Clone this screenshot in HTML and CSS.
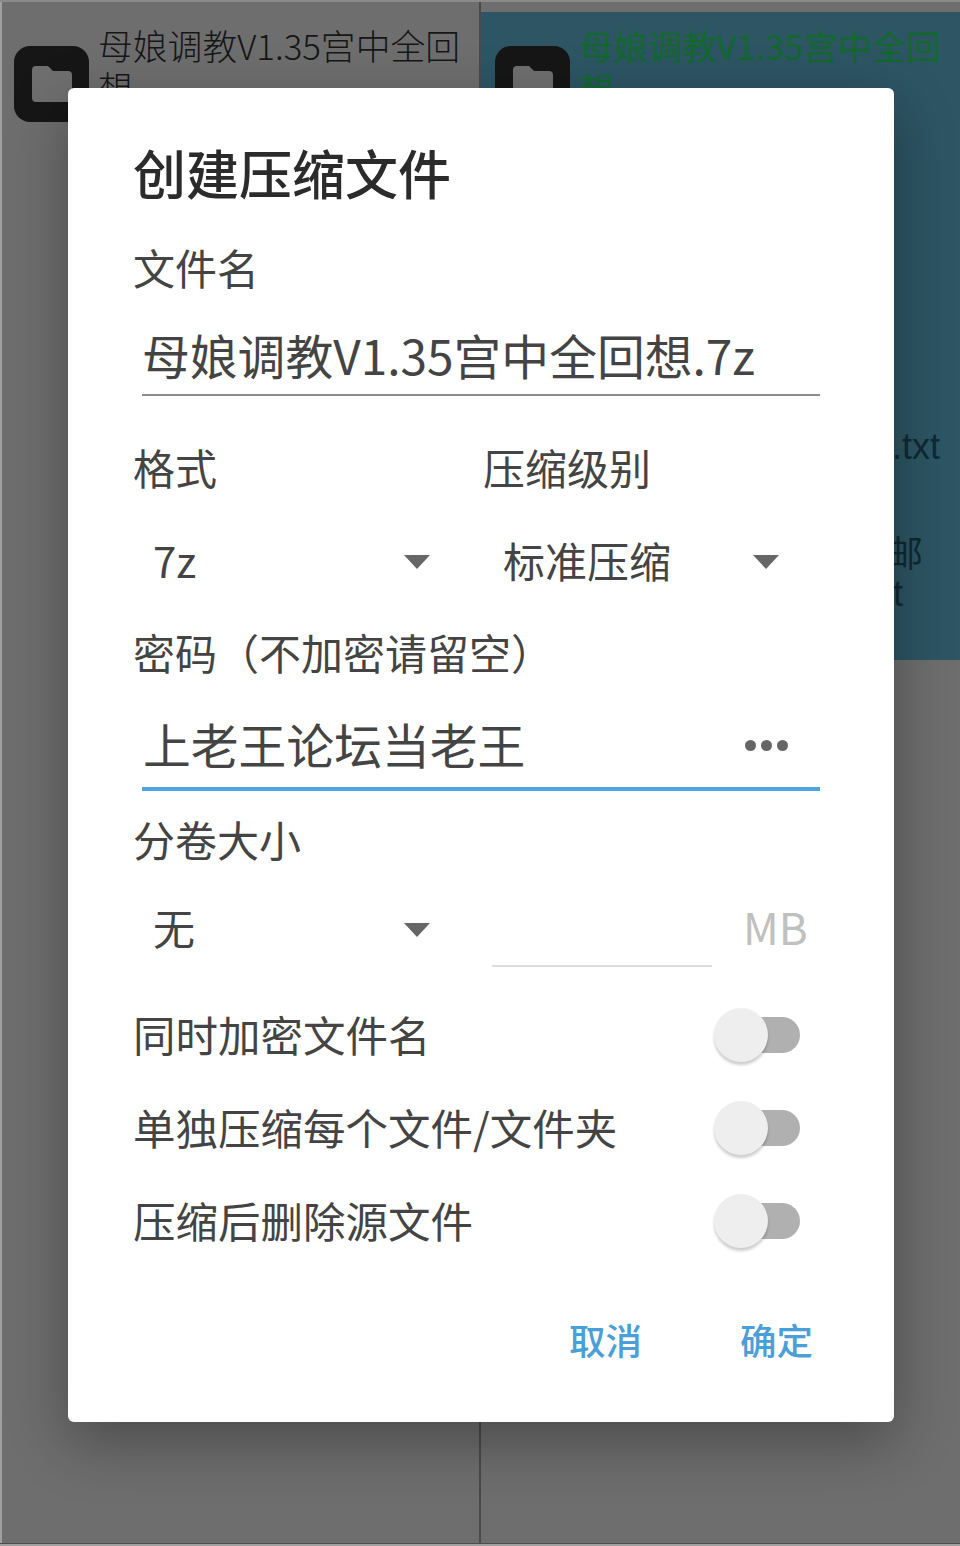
FILE: index.html
```html
<!DOCTYPE html>
<html lang="zh-CN">
<head>
  <meta charset="UTF-8">
  <title>创建压缩文件</title>
  <link rel="stylesheet" href="styles.css">
</head>
<body>
  <div class="panes">
    <div class="pane">
      <div class="file">
        <div class="folder">
          <svg width="40" height="36" viewBox="0 0 40 36"><path d="M4 0h12l5 5h15a4 4 0 0 1 4 4v23a4 4 0 0 1-4 4H4a4 4 0 0 1-4-4V4a4 4 0 0 1 4-4z" fill="#6f6f6f"/></svg>
        </div>
        <div class="file-name">母娘调教V1.35宫中全回想</div>
      </div>
    </div>
    <div class="pane pane-right">
      <div class="selected">
        <div class="file">
          <div class="folder">
            <svg width="40" height="36" viewBox="0 0 40 36"><path d="M4 0h12l5 5h15a4 4 0 0 1 4 4v23a4 4 0 0 1-4 4H4a4 4 0 0 1-4-4V4a4 4 0 0 1 4-4z" fill="#6f6f6f"/></svg>
          </div>
          <div class="file-name green">母娘调教V1.35宫中全回想</div>
        </div>
        <div class="peek peek-txt">.txt</div>
        <div class="peek peek-mail">邮</div>
        <div class="peek peek-t">t</div>
      </div>
    </div>
  </div>

  <div class="dialog">
    <div class="title">创建压缩文件</div>

    <div class="label">文件名</div>
    <div class="field">母娘调教V1.35宫中全回想.7z</div>

    <div class="two-col col-labels">
      <div class="label">格式</div>
      <div class="label">压缩级别</div>
    </div>
    <div class="two-col">
      <div class="select"><span>7z</span><i class="arrow"></i></div>
      <div class="select"><span>标准压缩</span><i class="arrow"></i></div>
    </div>

    <div class="label label-password">密码（不加密请留空）</div>
    <div class="field field-active">
      <span>上老王论坛当老王</span>
      <span class="dots"><b></b><b></b><b></b></span>
    </div>

    <div class="label label-split">分卷大小</div>
    <div class="two-col">
      <div class="select select-split"><span>无</span><i class="arrow"></i></div>
      <div class="size">
        <div class="size-input"></div>
        <span class="unit">MB</span>
      </div>
    </div>

    <div class="switches">
      <div class="switch-row"><span>同时加密文件名</span><div class="switch"></div></div>
      <div class="switch-row"><span>单独压缩每个文件/文件夹</span><div class="switch"></div></div>
      <div class="switch-row"><span>压缩后删除源文件</span><div class="switch"></div></div>
    </div>

    <div class="buttons">
      <span class="btn">取消</span>
      <span class="btn">确定</span>
    </div>
  </div>
</body>
</html>
```

FILE: styles.css
```css
* {
  box-sizing: border-box;
}
html, body {
  margin: 0;
  height: 100%;
}
body {
  position: relative;
  width: 960px;
  height: 1546px;
  overflow: hidden;
  background: #a0a0a0;
  font-family: "Noto Sans CJK SC", "Noto Sans", sans-serif;
  color: #444;
}

/* background file panes */
.panes {
  display: flex;
  height: 1544px;
  padding-left: 2px;
  border-top: 2px solid #8a8a8a;
  border-bottom: 1px solid #4c4c4c;
}
.pane {
  width: 479px;
  background: #6e6e6e;
  border-right: 2px solid #4a4a4a;
}
.pane-right {
  flex: 1;
  border-right: none;
  padding-top: 10px;
}
.selected {
  position: relative;
  height: 648px;
  background: #2d5564;
}
.file {
  display: flex;
  gap: 9px;
  padding: 22px 12px 0;
}
.pane-right .file {
  padding: 12px 14px 0;
}
.folder {
  display: flex;
  align-items: center;
  justify-content: center;
  flex: none;
  width: 75px;
  height: 76px;
  margin-top: 22px;
  border-radius: 16px;
  background: #161616;
}
.file-name {
  font-size: 34.8px;
  line-height: 42px;
  font-weight: 300;
  color: #161616;
}
.green {
  font-size: 34.4px;
  font-weight: 400;
  color: #13682e;
}
.peek {
  position: absolute;
  font-family: "Liberation Sans", "Noto Sans CJK SC", sans-serif;
  font-size: 36px;
  line-height: 36px;
  color: #0f2a33;
}
.peek-txt {
  top: 417px;
  left: 411px;
}
.peek-mail {
  top: 525px;
  left: 406px;
}
.peek-t {
  top: 564px;
  left: 412px;
}

/* dialog */
.dialog {
  position: absolute;
  top: 88px;
  left: 68px;
  width: 826px;
  height: 1334px;
  padding: 49px 74px 0 65px;
  background: #fff;
  border-radius: 6px;
  box-shadow: 0 20px 60px rgba(0, 0, 0, 0.32);
}
.title {
  height: 70px;
  font-size: 53px;
  line-height: 70px;
  font-weight: 500;
  color: #2b2b2b;
}
.label {
  height: 50px;
  margin-top: 35px;
  font-size: 42px;
  line-height: 50px;
}
.field {
  display: flex;
  align-items: center;
  justify-content: space-between;
  height: 74px;
  margin: 30px 0 0 9px;
  padding: 0 0 6px;
  border-bottom: 2px solid #8c8c8c;
  font-size: 47.8px;
  line-height: 66px;
}
.two-col {
  display: grid;
  grid-template-columns: 350px 337px;
}
.col-labels {
  margin-top: 14px;
}
.col-labels .label {
  margin-top: 32px;
}
.select {
  display: flex;
  align-items: center;
  justify-content: space-between;
  height: 74px;
  margin-top: 33px;
  padding: 0 53px 0 20px;
  font-size: 42px;
}
.select span {
  margin-bottom: 6px;
}
.two-col .select:last-child {
  padding-right: 41px;
}
.arrow {
  width: 0;
  height: 0;
  border-left: 13px solid transparent;
  border-right: 13px solid transparent;
  border-top: 14px solid #666;
}
.label-password {
  margin-top: 28px;
}
.field-active {
  height: 92px;
  margin-top: 22px;
  padding: 2px 32px 0 1px;
  border-bottom: 4px solid #4ea5e6;
}
.dots {
  display: flex;
  gap: 5px;
  margin-top: 2px;
}
.dots b {
  width: 11px;
  height: 11px;
  border-radius: 50%;
  background: #666;
}
.label-split {
  margin-top: 23px;
}
.select-split {
  margin-top: 29px;
}
.select-split span {
  margin-bottom: 8px;
}
.size {
  display: flex;
  align-items: center;
  margin-top: 29px;
  height: 74px;
}
.size-input {
  width: 220px;
  height: 74px;
  margin-left: 9px;
  border-bottom: 2px solid #ddd;
}
.unit {
  margin: 0 0 8px 31px;
  font-size: 44px;
  color: #c0c0c0;
}
.switches {
  display: flex;
  flex-direction: column;
  gap: 33px;
  margin-top: 38px;
}
.switch-row {
  display: flex;
  align-items: center;
  justify-content: space-between;
  height: 60px;
  padding-right: 20px;
  font-size: 42.5px;
}
.switch-row span {
  margin-bottom: 4px;
}
.switch {
  position: relative;
  width: 78px;
  height: 36px;
  border-radius: 18px;
  background: #b0b0b0;
}
/* thumb sits over the track */
.switch::before {
  content: "";
  position: absolute;
  top: -9px;
  left: -8px;
  width: 54px;
  height: 54px;
  border-radius: 50%;
  background: #eeeeee;
  box-shadow: 0 3px 3px rgba(0, 0, 0, 0.2);
}
.buttons {
  display: flex;
  justify-content: flex-end;
  gap: 98px;
  margin-top: 63px;
  padding-right: 7px;
}
.btn {
  font-size: 36.5px;
  line-height: 52px;
  font-weight: 500;
  color: #4a9fd8;
}
```
